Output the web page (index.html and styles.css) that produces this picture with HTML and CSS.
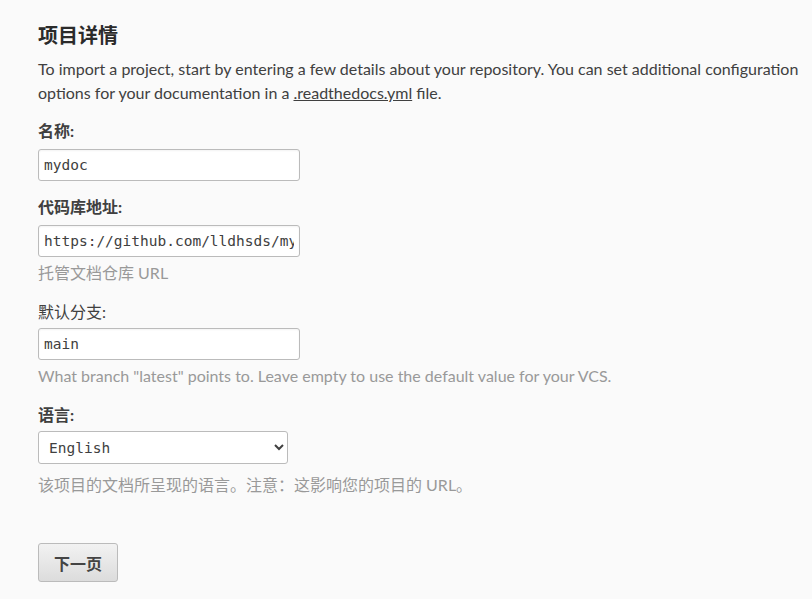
FILE: index.html
```html
<!DOCTYPE html>
<html lang="zh">
<head>
<meta charset="utf-8">
<link rel="stylesheet" href="styles.css">
</head>
<body>
<main class="page">
  <h2 class="title">项目详情</h2>
  <p class="intro">To import a project, start by entering a few details about your repository. You can set additional configuration options for your documentation in a <a href="#" class="link">.readthedocs.yml</a> file.</p>
  <form class="form">
    <div class="field">
      <label class="label strong">名称:</label>
      <input class="input" type="text" value="mydoc">
    </div>
    <div class="field">
      <label class="label strong">代码库地址:</label>
      <input class="input" type="text" value="https://github.com/lldhsds/mydoc">
      <p class="help">托管文档仓库 URL</p>
    </div>
    <div class="field field-wide">
      <label class="label label-tight">默认分支:</label>
      <input class="input" type="text" value="main">
      <p class="help">What branch "latest" points to. Leave empty to use the default value for your VCS.</p>
    </div>
    <div class="field field-wide">
      <label class="label label-tight strong">语言:</label>
      <select class="select"><option>English</option></select>
      <p class="help help-select">该项目的文档所呈现的语言。注意：这影响您的项目的 URL。</p>
    </div>
    <button type="button" class="btn">下一页</button>
  </form>
</main>
</body>
</html>
```
FILE: styles.css
```css
html, body {
  margin: 0;
  padding: 0;
  background: #fafafa;
}
body {
  font-family: Lato, "Noto Sans CJK SC", sans-serif;
  color: #404040;
  font-size: 16px;
}
.page {
  padding: 20px 0 0 38px;
}
.title {
  margin: 0;
  font-size: 20px;
  line-height: 30px;
  font-weight: 700;
  color: #2b2b2b;
}
.intro {
  margin: 7px 0 0;
  line-height: 24px;
}
.link {
  color: #404040;
}
.form {
  display: flex;
  flex-direction: column;
  align-items: flex-start;
  margin-top: 14px;
}
.field {
  display: flex;
  flex-direction: column;
  align-items: flex-start;
  margin-bottom: 14px;
}
.field-wide {
  margin-top: 1px;
  margin-bottom: 0;
}
.field-wide + .field-wide {
  margin-top: 15px;
}
.label {
  line-height: 24px;
  margin-bottom: 6px;
}
.label-tight {
  margin-bottom: 4px;
}
.strong { font-weight: 700; }
.input {
  box-sizing: border-box;
  width: 262px;
  height: 32px;
  padding: 0 5px;
  border: 1px solid #bbb;
  border-radius: 3px;
  background: #fff;
  font-family: "DejaVu Sans Mono", monospace;
  font-size: 14.5px;
  color: #404040;
  box-shadow: inset 0 1px 2px rgba(0,0,0,0.05);
}
.select {
  box-sizing: border-box;
  width: 250px;
  height: 33px;
  padding: 0 6px;
  border: 1px solid #bbb;
  border-radius: 3px;
  background: #fff;
  font-family: "DejaVu Sans Mono", monospace;
  font-size: 14.5px;
  color: #404040;
}
.help {
  margin: 4px 0 0;
  color: #999;
  line-height: 24px;
}
.help-select {
  margin-top: 9px;
}
.btn {
  margin-top: 46px;
  width: 80px;
  height: 39px;
  border: 1px solid #bbb;
  border-radius: 3px;
  background: linear-gradient(#f2f2f2, #dcdcdc);
  font-family: "Noto Sans CJK SC", sans-serif;
  font-size: 16px;
  font-weight: 700;
  color: #444;
}
```
